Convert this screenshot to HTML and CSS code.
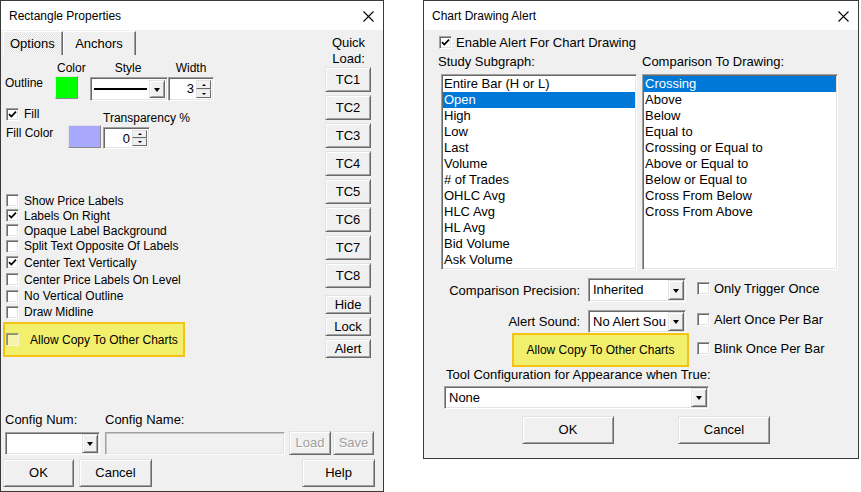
FILE: index.html
```html
<!DOCTYPE html>
<html>
<head>
<meta charset="utf-8">
<title>Dialogs</title>
<link rel="stylesheet" href="styles.css">
</head>
<body>
<div class="win win-left">
  <div class="titlebar">
    <span class="title">Rectangle Properties</span>
    <svg class="close" width="11" height="11" viewBox="0 0 11 11"><path d="M0.5 0.5L10.5 10.5M10.5 0.5L0.5 10.5" stroke="#000" stroke-width="1.1" fill="none"/></svg>
  </div>
  <div class="lbody">
    <div class="ltop">
      <div class="lpanel">
        <div class="tabs">
          <div class="tab tab-sel"><span class="focus">Options</span></div>
          <div class="tab tab-anchors">Anchors</div>
        </div>
        <div class="outline-grid">
          <span class="lbl-color">Color</span>
          <span class="lbl-style">Style</span>
          <span class="lbl-width">Width</span>
          <span class="lbl-outline">Outline</span>
          <div class="swatch swatch-green"></div>
          <div class="field combo style-combo"><div class="line-sample"></div><div class="ddbtn"><i class="arrow"></i></div></div>
          <div class="field spin-edit width-edit"><span class="val">3</span><div class="spin"><div class="sbtn"><i class="up"></i></div><div class="sbtn"><i class="down"></i></div></div></div>
        </div>
        <div class="fill-grid">
          <label class="cbitem fill-cb"><span class="cb"><svg viewBox="0 0 11 11"><path d="M2 5.2L4.3 7.6L9 2.6" stroke="#000" stroke-width="1.7" fill="none"/></svg></span>Fill</label>
          <span class="lbl-transp">Transparency %</span>
          <span class="lbl-fillcolor">Fill Color</span>
          <div class="swatch swatch-blue"></div>
          <div class="field spin-edit transp-edit"><span class="val">0</span><div class="spin"><div class="sbtn"><i class="up"></i></div><div class="sbtn"><i class="down"></i></div></div></div>
        </div>
        <div class="cblist">
          <label class="cbitem"><span class="cb"></span>Show Price Labels</label>
          <label class="cbitem"><span class="cb"><svg viewBox="0 0 11 11"><path d="M2 5.2L4.3 7.6L9 2.6" stroke="#000" stroke-width="1.7" fill="none"/></svg></span>Labels On Right</label>
          <label class="cbitem"><span class="cb"></span>Opaque Label Background</label>
          <label class="cbitem"><span class="cb"></span>Split Text Opposite Of Labels</label>
          <label class="cbitem"><span class="cb"><svg viewBox="0 0 11 11"><path d="M2 5.2L4.3 7.6L9 2.6" stroke="#000" stroke-width="1.7" fill="none"/></svg></span>Center Text Vertically</label>
          <label class="cbitem"><span class="cb"></span>Center Price Labels On Level</label>
          <label class="cbitem"><span class="cb"></span>No Vertical Outline</label>
          <label class="cbitem"><span class="cb"></span>Draw Midline</label>
        </div>
        <div class="yellow-box">
          <span class="cb cb-yellow"></span><span class="ytext">Allow Copy To Other Charts</span>
        </div>
      </div>
      <div class="qcol">
        <div class="qlabel">Quick<br>Load:</div>
        <div class="btn tc">TC1</div>
        <div class="btn tc">TC2</div>
        <div class="btn tc">TC3</div>
        <div class="btn tc">TC4</div>
        <div class="btn tc">TC5</div>
        <div class="btn tc">TC6</div>
        <div class="btn tc">TC7</div>
        <div class="btn tc">TC8</div>
        <div class="btn small hide-btn">Hide</div>
        <div class="btn small">Lock</div>
        <div class="btn small">Alert</div>
      </div>
    </div>
    <div class="lbottom">
      <div class="cfg-labels"><span class="cfg-num">Config Num:</span><span>Config Name:</span></div>
      <div class="cfg-row">
        <div class="field combo cfg-combo"><span class="ctext"></span><div class="ddbtn"><i class="arrow"></i></div></div>
        <div class="field-disabled cfg-name"></div>
        <div class="btn dis load-btn">Load</div>
        <div class="btn dis save-btn">Save</div>
      </div>
      <div class="lbtn-row">
        <div class="btn big ok-l">OK</div>
        <div class="btn big cancel-l">Cancel</div>
        <div class="btn big help-l">Help</div>
      </div>
    </div>
  </div>
</div>

<div class="win win-right">
  <div class="titlebar">
    <span class="title">Chart Drawing Alert</span>
    <svg class="close" width="11" height="11" viewBox="0 0 11 11"><path d="M0.5 0.5L10.5 10.5M10.5 0.5L0.5 10.5" stroke="#000" stroke-width="1.1" fill="none"/></svg>
  </div>
  <div class="rbody">
    <label class="cbitem enable-row"><span class="cb"><svg viewBox="0 0 11 11"><path d="M2 5.2L4.3 7.6L9 2.6" stroke="#000" stroke-width="1.7" fill="none"/></svg></span>Enable Alert For Chart Drawing</label>
    <div class="lists">
      <div class="list-col">
        <div class="list-title">Study Subgraph:</div>
        <div class="listbox lb-left">
          <div class="li">Entire Bar (H or L)</div>
          <div class="li sel">Open</div>
          <div class="li">High</div>
          <div class="li">Low</div>
          <div class="li">Last</div>
          <div class="li">Volume</div>
          <div class="li"># of Trades</div>
          <div class="li">OHLC Avg</div>
          <div class="li">HLC Avg</div>
          <div class="li">HL Avg</div>
          <div class="li">Bid Volume</div>
          <div class="li">Ask Volume</div>
        </div>
      </div>
      <div class="list-col">
        <div class="list-title">Comparison To Drawing:</div>
        <div class="listbox lb-right">
          <div class="li sel">Crossing</div>
          <div class="li">Above</div>
          <div class="li">Below</div>
          <div class="li">Equal to</div>
          <div class="li">Crossing or Equal to</div>
          <div class="li">Above or Equal to</div>
          <div class="li">Below or Equal to</div>
          <div class="li">Cross From Below</div>
          <div class="li">Cross From Above</div>
        </div>
      </div>
    </div>
    <div class="prow prow1">
      <span class="plabel">Comparison Precision:</span>
      <div class="field combo pcombo"><span class="ctext">Inherited</span><div class="ddbtn"><i class="arrow"></i></div></div>
      <label class="cbitem popt"><span class="cb"></span>Only Trigger Once</label>
    </div>
    <div class="prow prow2">
      <span class="plabel">Alert Sound:</span>
      <div class="field combo pcombo"><span class="ctext">No Alert Sou</span><div class="ddbtn"><i class="arrow"></i></div></div>
      <label class="cbitem popt"><span class="cb"></span>Alert Once Per Bar</label>
    </div>
    <div class="prow prow3">
      <div class="ybtn">Allow Copy To Other Charts</div>
      <label class="cbitem popt"><span class="cb"></span>Blink Once Per Bar</label>
    </div>
    <div class="tool-label">Tool Configuration for Appearance when True:</div>
    <div class="field combo tool-combo"><span class="ctext">None</span><div class="ddbtn"><i class="arrow"></i></div></div>
    <div class="rbtn-row">
      <div class="btn big ok-r">OK</div>
      <div class="btn big cancel-r">Cancel</div>
    </div>
  </div>
</div>
</body>
</html>
```

FILE: styles.css
```css
* { box-sizing: border-box; }
html, body { margin: 0; padding: 0; }
body {
  width: 861px;
  height: 492px;
  background: #fff;
  position: relative;
  overflow: hidden;
  font-family: "Liberation Sans", Arial, sans-serif;
  color: #000;
}

/* windows on desktop */
.win {
  position: absolute;
  top: 0;
  border: 1px solid #3a3a3a;
  background: #f0f0f0;
  display: flex;
  flex-direction: column;
}
.win-left { left: 0; width: 384px; height: 492px; }
.win-right { left: 423px; width: 436px; height: 459px; }

.titlebar {
  flex: none;
  height: 29px;
  background: #fff;
  display: flex;
  align-items: center;
  justify-content: space-between;
  padding: 0 9px 0 8px;
  font-size: 12px;
}
.title { line-height: 14px; padding-top: 1px; }
.close { display: block; margin-top: 1px; }

/* generic controls */
.btn {
  background: #f0f0f0;
  border: 1px solid;
  border-color: #e3e3e3 #696969 #696969 #e3e3e3;
  box-shadow: inset 1px 1px #fff, inset -1px -1px #a0a0a0;
  display: flex;
  align-items: center;
  justify-content: center;
  font-size: 13px;
  line-height: 14px;
}
.btn.dis { color: #a0a0a0; text-shadow: 1px 1px #fff; }

.field {
  background: #fff;
  border: 1px solid;
  border-color: #a0a0a0 #fff #fff #a0a0a0;
  box-shadow: inset 1px 1px #696969, inset -1px -1px #e3e3e3;
  position: relative;
}
.field-disabled {
  background: #f0f0f0;
  border: 1px solid;
  border-color: #a0a0a0 #fff #fff #a0a0a0;
  box-shadow: inset 1px 1px #c8c8c8, inset -1px -1px #e3e3e3;
}
.combo { display: flex; align-items: stretch; padding: 1px; }
.combo .ctext { flex: 1; font-size: 13px; line-height: 19px; padding-left: 3px; white-space: nowrap; overflow: hidden; }
.ddbtn {
  width: 16px;
  flex: none;
  margin-left: auto;
  background: #f0f0f0;
  border: 1px solid;
  border-color: #e3e3e3 #696969 #696969 #e3e3e3;
  box-shadow: inset 1px 1px #fff, inset -1px -1px #a0a0a0;
  display: flex;
  align-items: center;
  justify-content: center;
}
.arrow {
  display: block;
  width: 0; height: 0;
  border-left: 3.5px solid transparent;
  border-right: 3.5px solid transparent;
  border-top: 4px solid #000;
  margin-top: 1px;
}

.spin-edit { display: flex; align-items: stretch; padding: 2px; }
.spin-edit .val { flex: 1; text-align: right; font-size: 13px; line-height: 18px; padding-right: 2px; }
.spin { width: 15px; display: flex; flex-direction: column; }
.sbtn {
  flex: 1;
  background: #f0f0f0;
  border: 1px solid;
  border-color: #e3e3e3 #696969 #696969 #e3e3e3;
  display: flex;
  align-items: center;
  justify-content: center;
}
.up { display: block; width: 0; height: 0; border-left: 2px solid transparent; border-right: 2px solid transparent; border-bottom: 2px solid #000; }
.down { display: block; width: 0; height: 0; border-left: 2px solid transparent; border-right: 2px solid transparent; border-top: 2px solid #000; }

.cb {
  width: 13px;
  height: 13px;
  flex: none;
  background: #fff;
  border: 1px solid;
  border-color: #a0a0a0 #fff #fff #a0a0a0;
  box-shadow: inset 1px 1px #696969, inset -1px -1px #e3e3e3;
  display: flex;
  align-items: center;
  justify-content: center;
}
.cb svg { width: 11px; height: 11px; display: block; }
.cbitem { display: flex; align-items: center; white-space: nowrap; }

.swatch {
  border: 1px solid;
  border-color: #e3e3e3 #8a8a8a #8a8a8a #e3e3e3;
}
.swatch-green { background: #00ff00; width: 23px; height: 23px; }
.swatch-blue { background: #a8a8ff; width: 33px; height: 23px; }

/* ---------- left window ---------- */
.lbody { flex: 1; display: flex; flex-direction: column; font-size: 12px; }
.ltop { display: flex; height: 330px; }
.lpanel { width: 324px; }

.tabs { display: flex; margin: 1px 0 0 2px; height: 24px; }
.tab {
  font-size: 13px;
  display: flex;
  align-items: center;
  border-top: 1px solid #fff;
  border-left: 1px solid #fff;
  border-right: 1px solid #696969;
  box-shadow: inset -1px 0 #a0a0a0;
}
.tab-sel {
  width: 60px;
  padding: 2px 3px 2px 2px;
  background-color: #f0f0f0;
}
.tab-sel .focus {
  flex: 1;
  align-self: stretch;
  display: flex;
  align-items: center;
  padding-left: 4px;
  background-image: repeating-conic-gradient(#ffffff 0 25%, #dcdcdc 0 50%);
  background-size: 2px 2px;
}
.tab-anchors { width: 73px; justify-content: center; padding-right: 1px; }

.outline-grid {
  margin-top: 6px;
  display: grid;
  grid-template-columns: 54px 23px 12px 78px 46px;
  grid-template-rows: 15px 25px;
  line-height: 14px;
}
.lbl-color { grid-column: 2; grid-row: 1; margin-left: 2px; white-space: nowrap; }
.lbl-style { grid-column: 4; grid-row: 1; justify-self: center; margin-right: 2px; }
.lbl-width { grid-column: 5; grid-row: 1; justify-self: center; }
.lbl-outline { grid-column: 1; grid-row: 2; padding-left: 4px; align-self: start; }
.swatch-green { grid-column: 2; grid-row: 2; align-self: start; }
.style-combo { grid-column: 4; grid-row: 2; height: 24px; margin-top: 1px; padding: 2px; }
.line-sample { flex: 1; height: 2px; background: #000; align-self: center; margin: 0 2px 0 1px; }
.width-edit { grid-column: 5; grid-row: 2; height: 24px; margin-top: 1px; }

.fill-grid {
  margin-top: 5px;
  display: grid;
  grid-template-columns: 67px 33px 2px 47px;
  grid-template-rows: 19px 24px;
  line-height: 14px;
}
.fill-cb { grid-column: 1; grid-row: 1; padding-left: 5px; align-self: start; margin-top: 1px; }
.fill-cb .cb { margin-right: 5px; }
.lbl-transp { grid-column: 4; grid-row: 1; white-space: nowrap; align-self: end; }
.lbl-fillcolor { grid-column: 1; grid-row: 2; padding-left: 5px; align-self: start; margin-top: 1px; white-space: nowrap; }
.swatch-blue { grid-column: 2; grid-row: 2; align-self: start; }
.transp-edit { grid-column: 4; grid-row: 2; height: 22px; margin-top: 2px; }

.cblist { margin-top: 44px; padding-left: 5px; display: flex; flex-direction: column; }
.cblist .cbitem { height: 16px; line-height: 14px; }
.cblist .cbitem:nth-child(1),
.cblist .cbitem:nth-child(2),
.cblist .cbitem:nth-child(3) { height: 15px; }
.cblist .cbitem:nth-child(5),
.cblist .cbitem:nth-child(6) { height: 17px; }
.cblist .cb { margin-right: 5px; }

.yellow-box {
  margin: 2px 0 0 2px;
  width: 182px;
  height: 35px;
  background: #f1ef6b;
  border: 2px solid #f3c316;
  display: flex;
  align-items: center;
  padding-left: 1px;
}
.cb-yellow { background: #f6f4a8; box-shadow: inset 1px 1px #8d8d6a; border-color: #9a9a7a #f8f8d8 #f8f8d8 #9a9a7a; }
.ytext { margin-left: 11px; white-space: nowrap; }

.qcol { width: 46px; display: flex; flex-direction: column; gap: 3px; padding-top: 5px; }
.qlabel { text-align: center; font-size: 13px; line-height: 16px; margin-bottom: -3px; padding-left: 1px; }
.tc { height: 25px; font-size: 13px; }
.small { height: 19px; }
.hide-btn { margin-top: 4px; }

.lbottom { margin-top: auto; padding-bottom: 4px; font-size: 13px; }
.cfg-labels { display: flex; padding-left: 4px; line-height: 14px; height: 14px; }
.cfg-num { width: 100px; }
.cfg-row { display: flex; align-items: flex-end; margin-top: 4px; height: 24px; padding-left: 4px; }
.cfg-combo { width: 95px; height: 23px; }
.cfg-name { width: 180px; height: 23px; margin-left: 5px; }
.load-btn { width: 42px; height: 24px; margin-left: 4px; }
.save-btn { width: 41px; height: 24px; margin-left: 2px; }
.lbtn-row { display: flex; margin-top: 4px; padding: 0 8px 0 2px; }
.big { height: 28px; }
.ok-l { width: 71px; }
.cancel-l { width: 73px; margin-left: 5px; }
.help-l { width: 73px; margin-left: auto; }

/* ---------- right window ---------- */
.rbody { flex: 1; font-size: 13px; padding-left: 14px; display: flex; flex-direction: column; align-items: flex-start; }
.enable-row { margin-top: 4px; height: 16px; padding-left: 1px; line-height: 15px; }
.enable-row .cb { margin-right: 4px; }
.lists { display: grid; grid-template-columns: 199px 196px; column-gap: 5px; margin-top: 4px; }
.list-title { line-height: 16px; height: 16px; white-space: nowrap; }
.listbox {
  margin-top: 4px;
  height: 196px;
  background: #fff;
  border: 1px solid;
  border-color: #a0a0a0 #fff #fff #a0a0a0;
  box-shadow: inset 1px 1px #696969, inset -1px -1px #e3e3e3;
  padding: 1px;
}
.lb-left { margin-left: 3px; width: 196px; }
.lb-right { width: 196px; }
.li { height: 16px; line-height: 16px; padding-left: 1px; white-space: nowrap; }
.li.sel { background: #0078d7; color: #fff; }

.prow { display: flex; align-items: center; }
.prow1 { margin-top: 8px; height: 24px; }
.prow2 { margin-top: 8px; height: 23px; }
.prow3 { height: 34px; }
.plabel { width: 142px; text-align: right; white-space: nowrap; }
.pcombo { width: 98px; height: 100%; margin-left: 8px; }
.pcombo .ddbtn { width: 16px; }
.popt { margin-left: 11px; }
.popt .cb { margin-right: 4px; }
.prow1 .popt { margin-top: -3px; }
.prow2 .popt { margin-top: -5px; }
.ybtn {
  margin-left: 74px;
  width: 177px;
  height: 34px;
  background: #f1ef6b;
  border: 2px solid #f3c316;
  display: flex;
  align-items: center;
  justify-content: center;
  font-size: 12px;
  white-space: nowrap;
}
.prow3 .popt { margin-left: 8px; margin-top: -4px; }
.tool-label { margin-top: 1px; line-height: 14px; height: 14px; white-space: nowrap; padding-left: 8px; }
.tool-combo { margin: 4px 0 0 6px; width: 265px; height: 23px; }
.rbtn-row { display: flex; margin-top: 7px; }
.ok-r { width: 92px; margin-left: 84px; }
.cancel-r { width: 92px; margin-left: 64px; }
```
